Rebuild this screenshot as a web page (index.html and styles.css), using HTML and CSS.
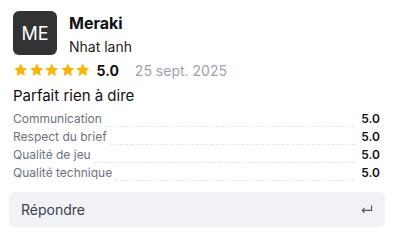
FILE: index.html
```html
<!DOCTYPE html>
<html lang="fr">
<head>
    <meta charset="UTF-8">
    <meta name="viewport" content="width=device-width, initial-scale=1.0">
    <title>Avis</title>
    <link rel="stylesheet" href="styles.css">
</head>
<body>
    <div class="review-card">
        <div class="review-body">
            <div class="review-header">
                <div class="avatar">ME</div>
                <div class="author">
                    <div class="author-name">Meraki</div>
                    <div class="author-sub">Nhat lanh</div>
                </div>
            </div>

            <div class="rating-row">
                <div class="stars">
                    <svg viewBox="0 0 24 24"><path d="M12 1.8l3.1 6.6 7.1.8-5.3 4.9 1.5 7.1L12 17.6l-6.4 3.6 1.5-7.1-5.3-4.9 7.1-.8z"/></svg>
                    <svg viewBox="0 0 24 24"><path d="M12 1.8l3.1 6.6 7.1.8-5.3 4.9 1.5 7.1L12 17.6l-6.4 3.6 1.5-7.1-5.3-4.9 7.1-.8z"/></svg>
                    <svg viewBox="0 0 24 24"><path d="M12 1.8l3.1 6.6 7.1.8-5.3 4.9 1.5 7.1L12 17.6l-6.4 3.6 1.5-7.1-5.3-4.9 7.1-.8z"/></svg>
                    <svg viewBox="0 0 24 24"><path d="M12 1.8l3.1 6.6 7.1.8-5.3 4.9 1.5 7.1L12 17.6l-6.4 3.6 1.5-7.1-5.3-4.9 7.1-.8z"/></svg>
                    <svg viewBox="0 0 24 24"><path d="M12 1.8l3.1 6.6 7.1.8-5.3 4.9 1.5 7.1L12 17.6l-6.4 3.6 1.5-7.1-5.3-4.9 7.1-.8z"/></svg>
                </div>
                <span class="rating-value">5.0</span>
                <span class="rating-date">25 sept. 2025</span>
            </div>

            <p class="review-title">Parfait rien à dire</p>

            <ul class="criteria">
                <li><span class="crit-label">Communication</span><span class="crit-dots"></span><span class="crit-value">5.0</span></li>
                <li><span class="crit-label">Respect du brief</span><span class="crit-dots"></span><span class="crit-value">5.0</span></li>
                <li><span class="crit-label">Qualité de jeu</span><span class="crit-dots"></span><span class="crit-value">5.0</span></li>
                <li><span class="crit-label">Qualité technique</span><span class="crit-dots"></span><span class="crit-value">5.0</span></li>
            </ul>
        </div>

        <div class="reply-box">
            <span class="reply-label">Répondre</span>
            <svg class="reply-icon" viewBox="0 0 14 12"><path d="M12.5 1.5v5.5H2.5M5 4.3L2.3 7 5 9.7" fill="none" stroke="#4b5563" stroke-width="1.2"/></svg>
        </div>
    </div>
</body>
</html>
```

FILE: styles.css
```css
body {
    margin: 0;
    padding: 0;
    background-color: #fff;
    font-family: Inter, "Noto Sans", sans-serif;
    color: #111;
}

.review-card {
    width: 396px;
    height: 240px;
    box-sizing: border-box;
    padding: 11px 11px 0 9px;
}

.review-body {
    padding: 0 5px 0 4px;
}

.review-header {
    display: flex;
    gap: 12px;
}

.avatar {
    width: 44px;
    height: 44px;
    border-radius: 6px;
    background-color: #333;
    color: #fff;
    font-size: 18px;
    display: flex;
    align-items: center;
    justify-content: center;
}

.author-name {
    font-size: 16px;
    font-weight: 700;
    line-height: 20px;
    margin-top: 2px;
}

.author-sub {
    font-size: 14px;
    line-height: 18px;
    margin-top: 5px;
    color: #222;
}

.rating-row {
    display: flex;
    align-items: center;
    margin-top: 5px;
    height: 18px;
}

.stars {
    display: flex;
}

.stars svg {
    width: 15.5px;
    height: 16px;
    fill: #fbb400;
}

.rating-value {
    font-size: 14px;
    font-weight: 700;
    margin-left: 6px;
}

.rating-date {
    font-size: 14px;
    color: #9ca3af;
    margin-left: 16px;
}

.review-title {
    font-size: 15px;
    margin: 7px 0 3px;
    line-height: 20px;
}

.criteria {
    list-style: none;
    margin: 0;
    padding: 0;
}

.criteria li {
    display: flex;
    align-items: flex-end;
    height: 18px;
    font-size: 12px;
}

.crit-label {
    color: #6b7280;
    line-height: 16px;
}

.crit-dots {
    flex: 1;
    border-bottom: 1px dashed #e5e7eb;
    margin: 0 5px 0 3px;
    align-self: flex-end;
}

.crit-value {
    font-weight: 600;
    line-height: 16px;
    width: 20px;
    text-align: right;
}

.reply-box {
    margin-top: 11px;
    height: 35px;
    border-radius: 6px;
    background-color: #f1f2f5;
    display: flex;
    align-items: center;
    justify-content: space-between;
    padding: 0 12px;
}

.reply-label {
    font-size: 14px;
    color: #374151;
}

.reply-icon {
    width: 13px;
    height: 11px;
}
```
